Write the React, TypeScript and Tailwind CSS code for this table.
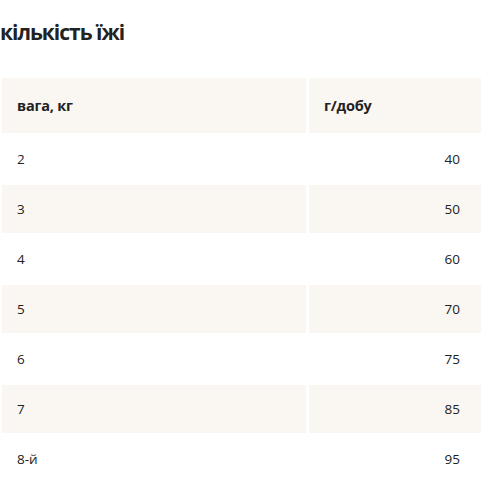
import React from "react";

const rows: [string, string][] = [
  ["2", "40"],
  ["3", "50"],
  ["4", "60"],
  ["5", "70"],
  ["6", "75"],
  ["7", "85"],
  ["8-й", "95"],
];

export default function App() {
  return (
    <div
      className="w-[482px] h-[482px] overflow-hidden bg-white text-[#222]"
      style={{ fontFamily: '"Open Sans", "Noto Sans", sans-serif' }}
    >
      <h2 className="pt-[18px] pl-0 text-[21px] leading-[28px] font-bold tracking-[-1px]">
        кількість їжі
      </h2>
      <table className="mt-[30px] w-[485px] border-separate border-spacing-x-[3px] border-spacing-y-[2px] -ml-[1px] text-[13.5px]">
        <thead>
          <tr>
            <th className="w-[304px] bg-[#faf7f2] text-left font-bold text-[14.5px] tracking-[-0.2px] px-[15px] h-[55px]">
              вага, кг
            </th>
            <th className="bg-[#faf7f2] text-left font-bold text-[14.5px] tracking-[-0.2px] px-[15px] h-[55px]">
              г/добу
            </th>
          </tr>
        </thead>
        <tbody>
          {rows.map(([a, b], i) => (
            <tr key={a}>
              <td className={`${i % 2 === 1 ? "bg-[#faf7f2]" : "bg-white"} px-[15px] h-[48px]`}>{a}</td>
              <td className={`${i % 2 === 1 ? "bg-[#faf7f2]" : "bg-white"} pr-[21px] text-right h-[48px]`}>{b}</td>
            </tr>
          ))}
        </tbody>
      </table>
    </div>
  );
}
